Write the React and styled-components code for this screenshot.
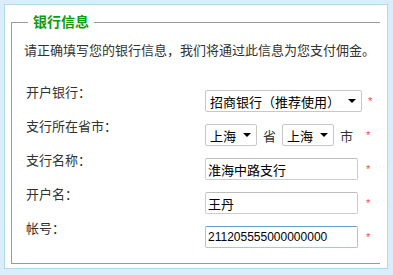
import React from 'react';
import styled, { createGlobalStyle } from 'styled-components';

const GlobalStyle = createGlobalStyle`
  html, body {
    margin: 0;
    padding: 0;
    background: #d9edfa;
    font-family: "Liberation Sans", "Noto Sans CJK SC", sans-serif;
  }
`;

const Frame = styled.div`
  box-sizing: border-box;
  margin: 4px 5px 0 4px;
  height: 265px;
  border: 1px solid #b3d9f0;
  background: #fff;
  overflow: hidden;
`;

const Box = styled.fieldset`
  margin: 8px 7px 0 6px;
  padding: 0 0 15px 0;
  border: 1px solid #9a9a9a;
  border-right: none;
  min-width: 0;
`;

const Legend = styled.legend`
  margin-left: 16px;
  padding: 0 5px;
  font-size: 14px;
  line-height: 18px;
  font-weight: bold;
  color: #129a12;
`;

const Intro = styled.p`
  margin: 10px 0 0 12px;
  font-size: 13px;
  line-height: 20px;
  color: #333;
  white-space: nowrap;
`;

const Form = styled.div`
  display: grid;
  grid-template-columns: 179px 1fr;
  row-gap: 12px;
  margin: 29px 0 0 14px;
`;

const Label = styled.div`
  margin-top: -5px;
  font-size: 13px;
  line-height: 16px;
  color: #333;
`;

const Field = styled.div`
  display: flex;
  align-items: center;
  height: 22px;
`;

const Select = styled.div`
  box-sizing: border-box;
  display: flex;
  align-items: center;
  justify-content: space-between;
  width: ${({ $w }) => $w}px;
  height: 22px;
  padding: 0 5px 0 4px;
  border: 1px solid #c8c8c8;
  border-radius: 2px;
  background: #fff;
  font-size: 13px;
  color: #000;
`;

const Caret = styled.span`
  width: 0;
  height: 0;
  border-left: 4px solid transparent;
  border-right: 4px solid transparent;
  border-top: 4px solid #000;
`;

const Input = styled.input`
  box-sizing: border-box;
  width: 153px;
  height: 22px;
  padding: 0 2px;
  border: 1px solid ${({ $focus }) => ($focus ? '#a3c7e8' : '#cdcdcd')};
  border-top-color: ${({ $focus }) => ($focus ? '#6d9ccc' : '#bdbdbd')};
  border-radius: 2px;
  outline: none;
  background: #fff;
  font-family: "Liberation Sans", "Noto Sans CJK SC", sans-serif;
  font-size: ${({ $num }) => ($num ? 12 : 13)}px;
  color: #000;
`;

const Unit = styled.span`
  margin: 0 6px;
  font-size: 13px;
  color: #333;
`;

const Star = styled.span`
  margin-left: ${({ $gap }) => $gap}px;
  font-size: 11px;
  line-height: 12px;
  color: #f44;
`;

export default function App() {
  return (
    <>
      <GlobalStyle />
      <Frame>
        <Box>
          <Legend>银行信息</Legend>
          <Intro>请正确填写您的银行信息，我们将通过此信息为您支付佣金。</Intro>
          <Form>
            <Label>开户银行：</Label>
            <Field>
              <Select $w={157}>
                招商银行（推荐使用）
                <Caret />
              </Select>
              <Star $gap={6}>*</Star>
            </Field>

            <Label>支行所在省市：</Label>
            <Field>
              <Select $w={52}>
                上海
                <Caret />
              </Select>
              <Unit>省</Unit>
              <Select $w={52}>
                上海
                <Caret />
              </Select>
              <Unit>市</Unit>
              <Star $gap={7}>*</Star>
            </Field>

            <Label>支行名称：</Label>
            <Field>
              <Input defaultValue="淮海中路支行" />
              <Star $gap={8}>*</Star>
            </Field>

            <Label>开户名：</Label>
            <Field>
              <Input defaultValue="王丹" />
              <Star $gap={8}>*</Star>
            </Field>

            <Label>帐号：</Label>
            <Field>
              <Input $focus $num defaultValue="211205555000000000" />
              <Star $gap={8}>*</Star>
            </Field>
          </Form>
        </Box>
      </Frame>
    </>
  );
}
